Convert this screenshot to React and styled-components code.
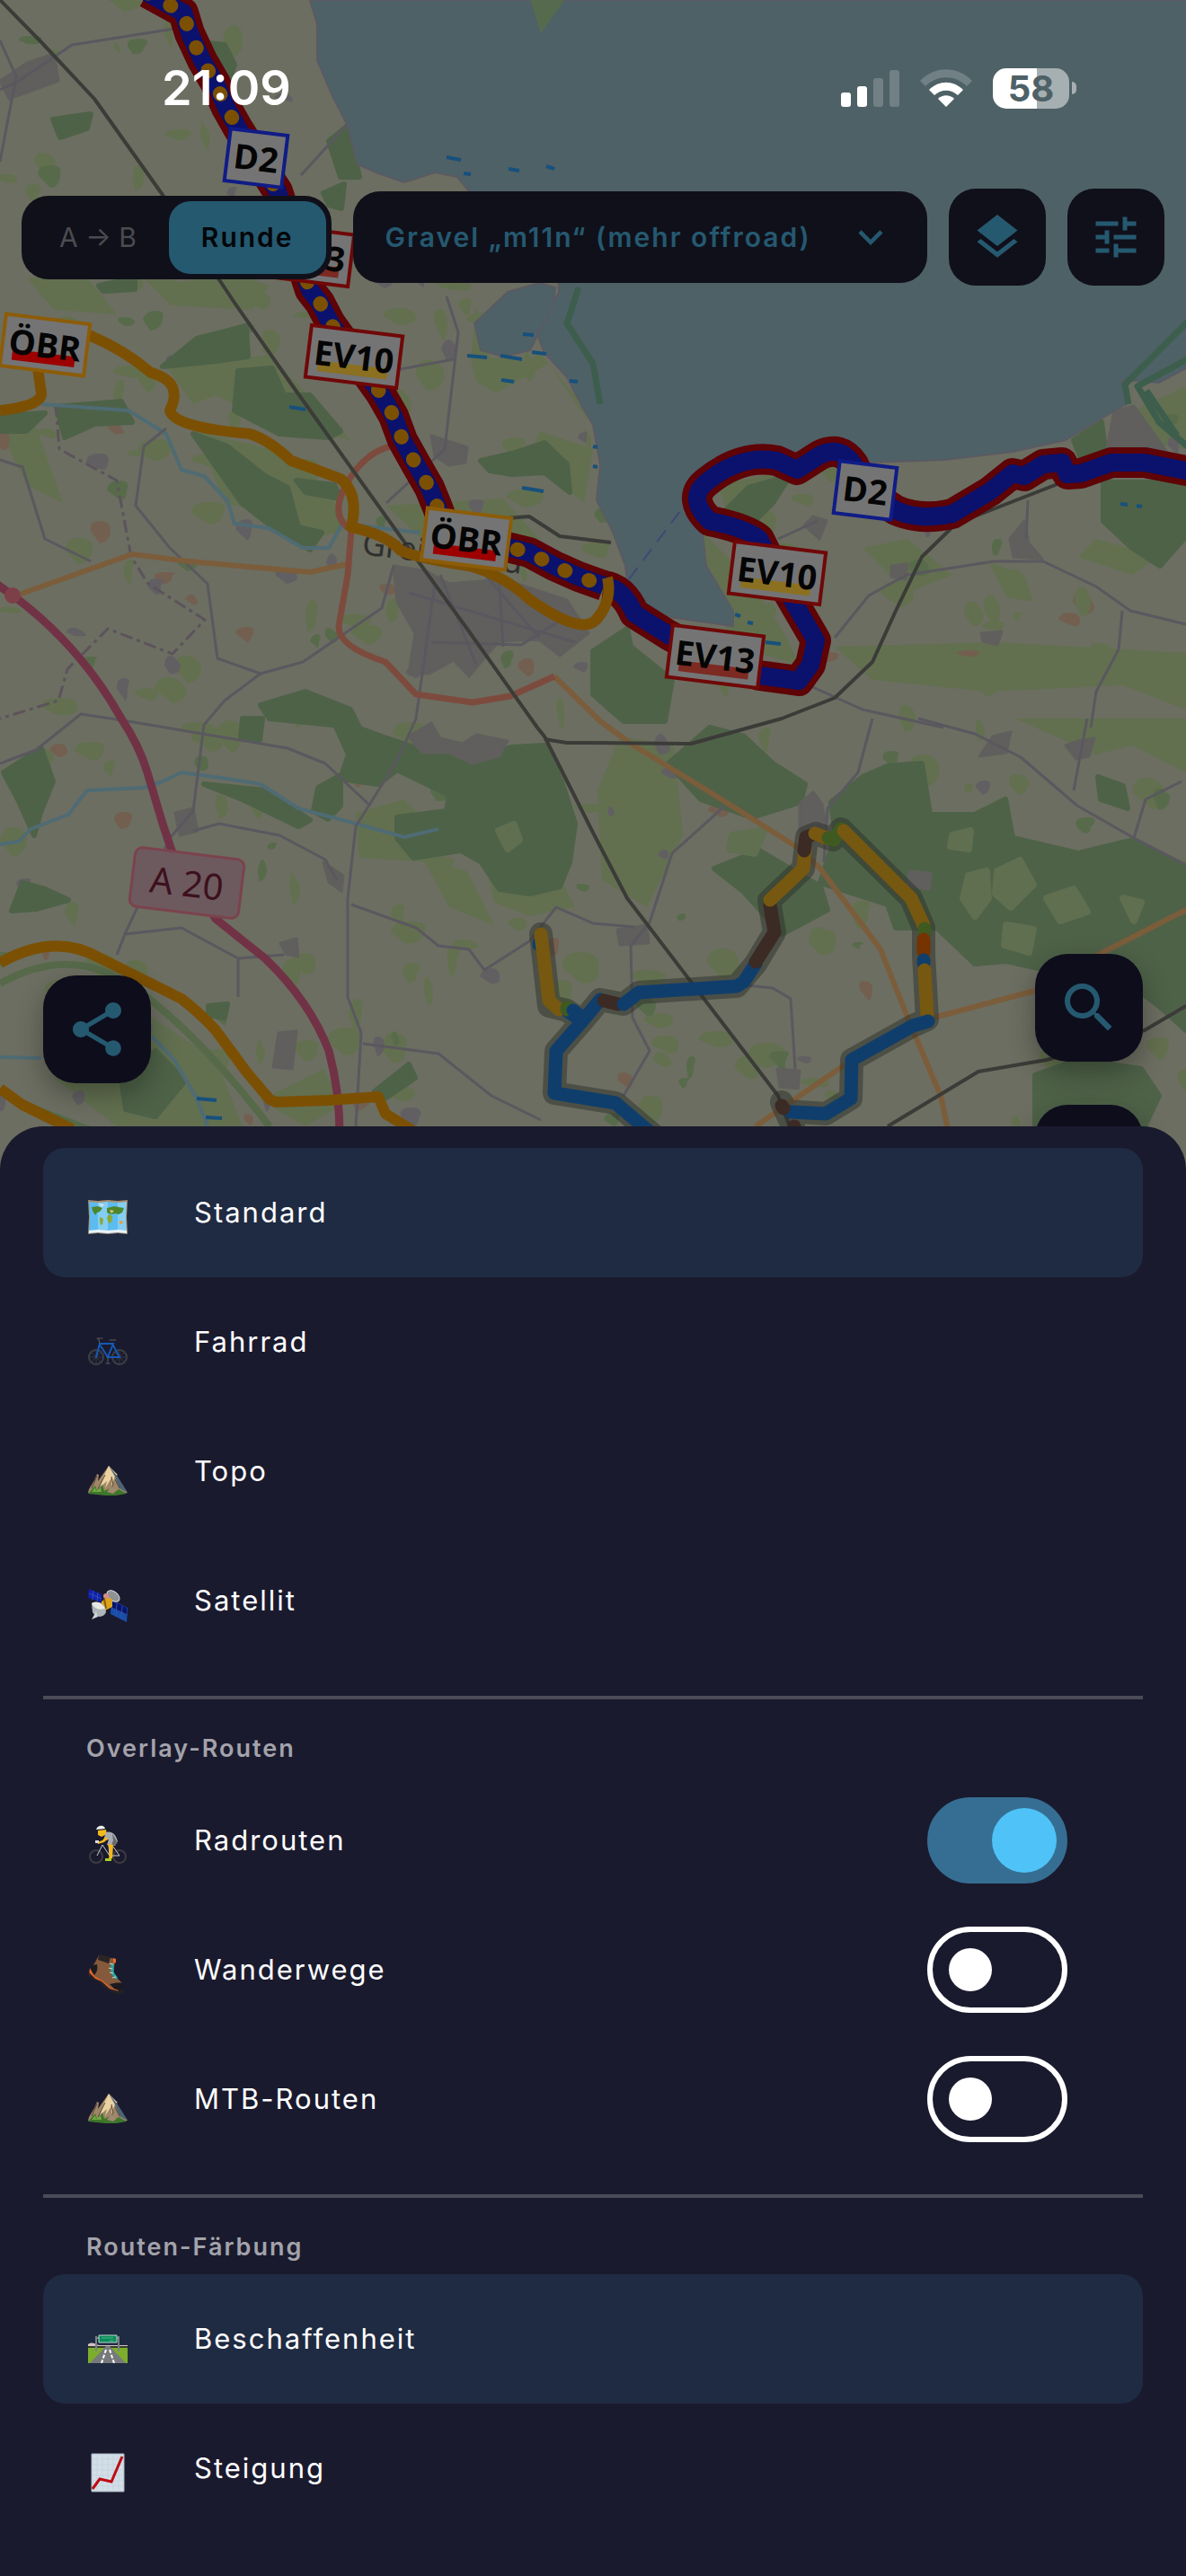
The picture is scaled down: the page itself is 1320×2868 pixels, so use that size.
import React, { useState } from 'react';
import styled, { createGlobalStyle } from 'styled-components';
import {
  MdKeyboardArrowDown,
  MdLayers,
  MdMyLocation,
  MdSearch,
  MdShare,
  MdTune,
} from 'react-icons/md';

const GlobalStyle = createGlobalStyle`
  * {
    box-sizing: border-box;
  }

  body {
    margin: 0;
    background: #1a1a2e;
    font-family: Inter, 'Liberation Sans', sans-serif;
  }

  button,
  select,
  input {
    margin: 0;
    font-family: inherit;
  }
`;

const Page = styled.div`
  display: flex;
  flex-direction: column;
  min-height: 100vh;
`;

const MapArea = styled.section`
  position: relative;
  display: flex;
  flex: 1;
  flex-direction: column;
  min-height: 640px;
`;

// runs on behind the rounded corners of the sheet
const MapCanvas = styled.svg`
  position: absolute;
  top: 0;
  left: 0;
  width: 100%;
  height: calc(100% + 48px);
  background: #6c6e61;
`;

const StatusBar = styled.header`
  position: relative;
  display: flex;
  align-items: center;
  justify-content: space-between;
  height: 130px;
  padding: 66px 122px 0 180px;
  color: #fff;
`;

const Clock = styled.time`
  font-size: 54px;
  font-weight: 600;
  line-height: 64px;
`;

const StatusIcons = styled.div`
  display: flex;
  align-items: center;
  gap: 23px;
`;

const Battery = styled.div`
  display: flex;
  align-items: center;
  gap: 3px;

  &::after {
    content: '';
    width: 5px;
    height: 14px;
    border-radius: 0 7px 7px 0;
    background: #a6afb2;
  }
`;

const BatteryLevel = styled.span`
  width: 85px;
  border-radius: 15px;
  background: linear-gradient(to right, #fff 58%, #a6afb2 58%);
  color: #4e6167;
  font-size: 40px;
  font-weight: 700;
  line-height: 45px;
  text-align: center;
`;

const Toolbar = styled.nav`
  position: relative;
  display: flex;
  align-items: center;
  gap: 24px;
  margin-top: 80px;
  padding: 0 24px;
`;

const Segmented = styled.div`
  display: flex;
  padding: 6px;
  border-radius: 30px;
  background: #10101a;
`;

const Segment = styled.button`
  padding: 0 36px;
  border: 0;
  border-radius: 24px;
  background: ${({ $active }) => ($active ? '#255970' : 'transparent')};
  color: ${({ $active }) => ($active ? '#030609' : '#4b4b50')};
  font-size: 30px;
  font-weight: ${({ $active }) => ($active ? 600 : 400)};
  letter-spacing: ${({ $active }) => ($active ? '2px' : 'normal')};
  line-height: 81px;
`;

const ProfilePicker = styled.label`
  display: flex;
  flex: 1;
  align-items: center;
  min-width: 0;
  padding: 0 36px;
  border-radius: 30px;
  background: #10101a;
  color: #255970;
  font-size: 54px;

  svg {
    flex: none;
  }
`;

const ProfileSelect = styled.select`
  flex: 1;
  min-width: 0;
  height: 102px;
  padding: 0;
  border: 0;
  appearance: none;
  background: transparent;
  color: inherit;
  font-size: 30px;
  font-weight: 600;
  letter-spacing: 2px;
`;

const ToolButton = styled.button`
  display: flex;
  flex: none;
  align-items: center;
  justify-content: center;
  width: 108px;
  height: 108px;
  padding: 0;
  border: 0;
  border-radius: 30px;
  background: #10101a;
  color: #255970;
  font-size: 60px;
`;

const FloatingBar = styled.div`
  position: relative;
  display: flex;
  align-items: flex-end;
  justify-content: space-between;
  margin-top: auto;
  padding: 0 48px 48px;
`;

// the lower button is tucked under the sheet
const FloatingStack = styled.div`
  display: flex;
  flex-direction: column;
  gap: 48px;
  margin-bottom: -144px;
`;

const FloatingButton = styled(ToolButton)`
  width: 120px;
  height: 120px;
  border-radius: 36px;
  background: #0e0d1c;
  box-shadow: 0 12px 30px rgba(0, 0, 0, 0.3);
  font-size: 72px;
`;

const Sheet = styled.main`
  position: relative;
  padding: 24px 48px 48px;
  border-radius: 48px 48px 0 0;
  background: #1a1a2e;
  color: #fff;
`;

const Group = styled.fieldset`
  min-width: 0;
  margin: 0;
  padding: 0;
  border: 0;

  & + & {
    margin-top: 34px;
    border-top: 4px solid #4b4a58;
    padding-top: 34px;
  }
`;

const GroupTitle = styled.h2`
  margin: 0;
  padding: 0 48px 9px;
  color: #a3a3ab;
  font-size: 27px;
  font-weight: 600;
  letter-spacing: 2px;
  line-height: 42px;
`;

const Row = styled.label`
  display: flex;
  align-items: center;
  gap: 72px;
  height: 144px;
  padding: 0 84px 0 48px;
  border-radius: 24px;
  background: ${({ $selected }) => ($selected ? '#1f2b42' : 'transparent')};
`;

const RowIcon = styled.svg`
  flex: none;
  width: 48px;
  height: 54px;
  padding: 10px 2px 0;
`;

const RowLabel = styled.span`
  flex: 1;
  font-size: 31px;
  letter-spacing: 2px;
  line-height: 48px;
`;

const HiddenRadio = styled.input`
  width: 0;
  height: 0;
  appearance: none;
`;

const Toggle = styled.input`
  display: flex;
  flex: none;
  align-items: center;
  width: 156px;
  height: 96px;
  padding: 0 18px;
  border: 6px solid #fff;
  border-radius: 48px;
  appearance: none;

  &::before {
    content: '';
    width: 48px;
    height: 48px;
    border-radius: 50%;
    background: #fff;
  }

  &:checked {
    justify-content: flex-end;
    padding: 0 6px;
    border-color: #366e93;
    background: #366e93;
  }

  &:checked::before {
    width: 72px;
    height: 72px;
    background: #4fc3f7;
  }
`;

const SignalIcon = () => (
  <svg width="65" height="42" viewBox="0 0 65 42" fill="#fff">
    <rect x="0" y="26" width="11" height="16" rx="3" />
    <rect x="18" y="19" width="11" height="23" rx="3" />
    <rect x="36" y="10" width="11" height="32" rx="3" opacity="0.2" />
    <rect x="54" y="1" width="11" height="41" rx="3" opacity="0.2" />
  </svg>
);

const WifiIcon = () => (
  <svg width="58" height="42" viewBox="0 0 58 42" fill="#fff">
    <path d="M0 13C16-4 42-4 58 13l-6 6C39 6 19 6 6 19z" opacity="0.2" />
    <path d="M10 23c11-11 27-11 38 0l-6 6c-8-7-18-7-26 0z" />
    <path d="M20 33c5-5 13-5 18 0l-9 9z" />
  </svg>
);

const WorldMapIcon = () => (
  <>
    <path d="M0 3l11 1 11-1 11 1 11-1-1 19 1 19-11-1-11 1-11-1-11 1 1-19z" fill="#a98d70" />
    <path d="M1 5l10 1v33L1 40l1-18zM22 5l11 1v33l-11 1z" fill="#5cbcf0" />
    <path d="M11 6l11-1v35l-11-1zM33 6l10-1-1 17 1 18-10-1z" fill="#84cdf3" />
    <path d="M1 37l10-1 11 1 11-1 10 1v3l-10-1-11 1-11-1-10 1z" fill="#e6f2f8" />
    <path d="M4 11l7-1 5 2-3 4-3 1-2 3-3-5zM21 12l8-2 11 2-2 5-4 2-4-1-4 1-5-2z" fill="#4d862d" />
    <path d="M13 22l4 2-1 6-2 1-1-5zM23 19l4 2-1 7-3 1-2-6z" fill="#8ca92f" />
    <path d="M12 7l6 1-3 3z" fill="#dbe6e8" />
    <path d="M35 26l4 1-1 3-3-1z" fill="#ef9b35" />
    <path d="M24 14l5 1-3 3z" fill="#e3c577" />
  </>
);

const BikeIcon = () => (
  <g fill="none" strokeLinecap="round">
    <g stroke="#3e4046" strokeWidth="2">
      <circle cx="9" cy="34" r="8" />
      <circle cx="35" cy="34" r="8" />
    </g>
    <path
      d="M9 26v16M1 34h16M3 28l12 12M15 28L3 40M35 26v16M27 34h16M29 28l12 12M41 28L29 40"
      stroke="#37393f"
      strokeWidth="1"
    />
    <path d="M9 34l4-15h15L22 34h13L27 19M13 20l9 14" stroke="#1459b5" strokeWidth="2" />
    <path d="M13 19l-1-5-1 0M10 13h6M24 15h7M22 34v6M20 41h4" stroke="#5b5d63" strokeWidth="1" />
  </g>
);

const MountainIcon = () => (
  <>
    <path d="M1 37l6-10 3-7 2 1-1 7 12-17 9 11 12 19-9 1H12L0 41z" fill="#9e8667" />
    <path d="M23 11l-5 10-5 14 8-7-2 8 8-13-1 12 4-13 3-1z" fill="#ead2a2" />
    <path d="M23 11l9 11 12 19-9-5-5-13z" fill="#4a6478" />
    <path d="M26 23l2 9-5 9M30 26l5 10M19 21l-8 16M10 22l-6 14" stroke="#584537" strokeWidth="1" fill="none" />
    <path d="M0 42l8-9 2 6 6-7 2 7 7-3 4 5 5-4 9 5-12 2H19z" fill="#3e762b" />
    <path d="M4 40l4-5 1 4 5-4 1 5z" fill="#70a941" />
    <path d="M21 40l5-6 5 4-3 4z" fill="#a18a70" />
  </>
);

const SatelliteIcon = () => (
  <>
    <path d="M1 4l14 6v9L0 14z" fill="#1020b0" />
    <path d="M26 16l18 9-1 16-18-9z" fill="#174eaa" />
    <path d="M26 17l17 8v8l-17-8z" fill="#08146e" />
    <path d="M1 9l14 6M6 6L5 16M11 8l-1 10M26 25l18 8M32 20l-1 15M38 23l-1 15" stroke="#3450a8" fill="none" />
    <ellipse cx="28" cy="12" rx="8" ry="5" transform="rotate(38 28 12)" fill="#8e9295" stroke="#d7d8d8" />
    <path d="M15 18l7-5 5 3v8l-8 4-5-4z" fill="#daa51d" />
    <path d="M18 15l2 11" stroke="#8d5a11" strokeWidth="2" />
    <circle cx="20" cy="12" r="3" fill="#d78e87" />
    <path d="M4 20c7-4 16 1 16 10-3 7-12 6-15 0z" fill="#aeb5b9" />
    <path d="M4 20c6-3 12 0 15 6-7 2-12 0-15-6z" fill="#e8e8e3" />
    <path d="M9 29l-5 9 7-3z" fill="#d0d3d5" />
  </>
);

const CyclistIcon = () => (
  <>
    <g fill="none" stroke="#3b3b42" strokeWidth="2">
      <circle cx="9" cy="35" r="7" />
      <circle cx="35" cy="35" r="7" />
    </g>
    <path d="M10 34l6-12 8 12M24 34l-1-12M28 24l7 10H24" fill="none" stroke="#c9ccd0" strokeWidth="1" />
    <path d="M11 6l9-1 1 5-6 3-4-2z" fill="#f4b91d" />
    <path d="M9 5c1-5 9-6 10-1z" fill="#eef0f0" />
    <path d="M20 8c6-2 11 2 13 10l-3 5-9-1 2-6-3 1-2-3z" fill="#a9abb0" />
    <path d="M27 10l5 8-1 4-5 1 2-6z" fill="#66676c" />
    <path d="M19 13l3 2-4 4-7 2-1-2 6-2zM22 21l6 1-1 15-4 1 1-10z" fill="#f5b818" />
    <path d="M8 17h4v3H8z" fill="#d8dde1" />
    <path d="M19 37h7v3h-7z" fill="#a8cf22" />
  </>
);

const BootIcon = () => (
  <>
    <path d="M12 1l18 4c0 7-2 13-1 18l10 10v8l-9 2-12-9-10-8-7-6 5-8z" fill="#855a3c" />
    <path d="M12 0l13 3-2 7-12-4z" fill="#2b2523" />
    <path d="M2 17c1-3 4-6 8-6 1 5 0 8-3 12z" fill="#1b1b20" />
    <path d="M28 4l3 1v4l-3 1z" fill="#ee672d" />
    <path d="M27 10v10l5 7" fill="none" stroke="#25a9a8" strokeWidth="3" />
    <path d="M24 10l4 1M23 15l4 1M24 20l4 1M27 26l4-1" stroke="#d1dad9" />
    <path d="M24 33c5-1 10-2 15-1l1 6-6 5z" fill="#1b1a20" />
    <path d="M2 15l5 9 10 6 8 7 9 3-2 3-10-4-10-9L1 23z" fill="#e36424" />
    <path d="M0 19l8 8 7 3 9 8 10 3 6-4-1 7H30l-9-5-9-8-9-4z" fill="#222126" />
  </>
);

const RoadIcon = () => (
  <>
    <path d="M0 23c6-4 9 1 13 1h31v3H0z" fill="#d8c0c5" />
    <path d="M0 25h44v19H0z" fill="#7dae2b" />
    <path d="M0 25h44v2H0z" fill="#34402c" />
    <path d="M20 25h4l18 19H2z" fill="#777a7c" />
    <path d="M20 29L15 44M24 29l5 15" stroke="#fff" strokeWidth="2" strokeDasharray="4 2" />
    <path d="M9 14v17M34 14v17M9 16h26" stroke="#7a8288" strokeWidth="2" />
    <path d="M12 13h20v8H12z" fill="#0b8c5b" stroke="#bbd9cd" />
    <path d="M15 16h13M24 19h4" stroke="#4fb083" />
  </>
);

const ChartIcon = () => (
  <>
    <path d="M4 1h36v42H4z" fill="#d3dfe8" stroke="#a9b5bf" />
    <path
      d="M4 7h36M4 13h36M4 19h36M4 25h36M4 31h36M4 37h36M10 1v42M16 1v42M22 1v42M28 1v42M34 1v42"
      stroke="#c7d3dd"
      strokeWidth="1"
    />
    <path d="M5 40l8-11 13 3L38 4" fill="none" stroke="#bd0b12" strokeWidth="3" />
  </>
);

const WATER = [
  '345,0 353,27 353,67 370,107 387,140 398,183 421,193 450,203 484,192 509,197 522,213 560,240 620,290 622,325 598,373 606,393 631,420 648,453 660,473 668,517 664,557 681,590 696,630 698,647 715,673 744,687 816,697 816,680 786,630 782,593 761,563 763,540 820,512 887,515 929,497 963,515 1051,512 1127,503 1186,490 1224,467 1253,450 1249,423 1290,426 1320,410 1320,0',
  '565,325 600,315 618,320 616,340 600,370 590,390 560,397 535,390 528,360',
];

const MEADOWS = [
  '929,720 1110,715 1320,727 1320,790 1249,763 1100,770 971,757',
  '782,593 830,640 870,700 890,740 816,720 786,640',
  '530,340 524,400 530,425 552,438 575,425 610,405 640,440 655,470 600,390 590,402 545,398',
  '219,480 300,500 370,560 385,590 350,600 290,570 250,560',
  '185,408 300,395 390,490 300,470 240,440 215,450',
  '150,300 200,314 260,305 300,318 280,345 190,340',
  '30,310 60,345 130,350 90,300',
  '60,1130 120,1100 240,1180 270,1254 130,1254 60,1200',
  '396,905 450,890 500,940 480,960 400,955',
  '540,960 620,970 640,1010 590,1020 550,1005',
  '470,955 520,970 550,1030 500,1010',
  '690,820 750,830 760,930 720,1010 670,980 665,880',
  '1130,800 1320,800 1320,860 1260,830 1220,840',
  '960,610 1010,600 1060,640 1010,660',
  '1100,625 1140,640 1150,670 1120,665',
  '1256,460 1320,430 1320,500 1290,495',
  '800,540 870,525 850,580 810,580',
  '1220,600 1290,620 1260,640 1200,620',
  '440,240 500,315 420,290',
  '589,0 602,37 631,0',
  '430,563 560,555 600,600 470,600',
  '600,480 660,500 650,560 590,510',
  '0,480 40,475 70,560 30,540',
  '290,1225 360,1190 380,1230 340,1254',
];

const FORESTS = [
  '219,377 274,363 276,397 240,402 181,408',
  '265,413 303,410 316,440 345,440 379,480 366,487 311,483 261,457',
  '215,483 253,497 295,530 320,543 332,587 358,593 345,612 311,593 269,560 248,530',
  '63,453 135,447 147,470 105,472 72,487',
  '0,463 50,460 29,480 0,480',
  '535,513 570,505 606,493 631,517 634,548 606,526 570,528 545,524',
  '330,535 372,540 379,555 340,548',
  '4,860 46,833 59,870 45,905 38,930 20,890',
  '13,1014 25,983 50,990 76,1002 40,1012',
  '370,800 425,820 470,835 539,840 570,832 606,830 625,870 640,917 634,960 623,987 590,995 556,990 536,960 513,947 460,955 442,933 442,910 497,903 500,885 442,857 421,873 379,867 388,840',
  '354,877 379,863 379,897 365,912 349,903',
  '227,873 295,880 345,913 332,920 270,890',
  '270,800 292,800 289,824 268,820',
  '135,1200 173,1170 206,1203 173,1243 140,1235',
  '232,1120 253,1118 250,1133 232,1130',
  '290,785 340,770 390,790 400,810 300,800',
  '660,725 698,700 702,720 748,757 740,803 694,803 660,773',
  '833,543 879,530 860,560 833,587 806,570',
  '1228,537 1320,537 1320,597 1291,630 1260,610 1228,580',
  '1195,490 1226,470 1230,500 1204,512',
  '744,850 790,810 828,820 860,850 896,873 891,893 837,910 780,890',
  '925,893 960,865 988,853 1026,850 1035,907 1085,907 1119,890 1127,933 1200,950 1262,935 1320,967 1320,1147 1290,1120 1250,1090 1200,1070 1165,1080 1120,1070 1085,1073 1043,1033 997,1033 988,1007 913,983 930,930',
  '795,967 845,947 913,987 921,1013 870,1040 828,993',
  '1152,1197 1200,1180 1270,1190 1290,1220 1274,1254 1152,1254',
  '1222,865 1250,875 1255,900 1225,890',
  '59,133 101,127 97,143 67,153',
  '231,48 250,50 261,72 250,100 240,72',
  '366,157 387,140 400,197 379,197',
  '360,215 383,205 380,232 366,228',
  '110,318 150,310 150,322 115,324',
  '417,1215 455,1185 462,1200 430,1222',
  '560,205 590,202 620,213 570,213',
];

// open ground inside the woods
const CLEARINGS = [
  '555,925 572,918 578,935 565,945',
  '1078,975 1098,970 1100,1000 1085,1020 1072,1000',
  '1110,970 1135,958 1150,985 1125,1010 1108,995',
  '1060,930 1080,925 1078,945 1058,942',
  '1165,1000 1195,990 1210,1015 1180,1025',
  '1250,1000 1270,1005 1262,1025',
  '1120,1030 1150,1035 1145,1060 1118,1052',
  '815,930 850,925 840,950 812,945',
];

const TOWNS = [
  '438,630 475,636 500,650 560,645 631,668 655,705 623,730 600,712 555,714 522,753 505,735 478,750 455,750 462,705 442,670',
  '30,70 60,60 65,90 10,110 0,90',
  '455,820 480,805 490,822 515,828 530,818 565,825 555,842 525,850 500,838 470,838',
  '195,905 215,900 220,925 200,930',
  '890,895 905,882 915,895 920,925 890,925',
  '1012,970 1036,972 1034,990 1010,986',
  '1124,600 1140,580 1145,605 1160,622 1128,620',
  '895,585 905,575 920,580 912,600',
  '1186,830 1200,825 1218,822 1212,842 1198,845',
  '1105,820 1125,815 1120,838 1090,842',
  '480,485 520,498 518,515 500,518 484,508',
  '310,1150 330,1148 325,1190 304,1188',
  '992,630 1010,628 1008,645 992,642',
  '1092,705 1115,703 1110,718 1094,714',
  '1240,458 1262,452 1300,505 1232,500',
  '687,1035 720,1030 722,1050 690,1052',
  '865,1190 890,1192 888,1212 868,1210',
  '360,960 382,975 380,992 366,982',
  '312,1050 330,1045 332,1065 318,1062',
];

const ROADS = [
  'M0 100L21 90 80 50 194 32',
  'M0 45L18 85 0 180',
  'M0 512L25 520 50 600 101 625',
  'M185 477L160 497 151 563 189 610 231 650 242 733 290 750 337 737 425 677 438 630',
  'M290 750L250 780 227 807 215 903 189 933 139 1040 130 1063',
  'M484 650L463 800 442 847 396 920 387 1000 387 1110 402 1150 396 1254',
  'M143 803L320 833 362 850 412 897',
  'M0 850L40 835 90 795 143 803',
  'M215 925L244 917 311 930 362 957 375 980',
  'M391 1007L463 1033 488 1053 522 1057 539 1080 589 1048 619 1010 660 1028 706 1032',
  'M139 1040L202 1033 265 1067 316 1063M265 1067L265 1110',
  'M404 1162L488 1173 547 1220 602 1247',
  'M929 710L967 663 1009 640 1106 625 1161 625 1220 653 1258 680 1320 695',
  'M1249 680L1245 723 1220 770 1214 810',
  'M1022 800L1085 817 1136 843 1199 897 1262 933 1320 963',
  'M971 800L955 860 921 900 917 960',
  'M807 897L748 950 723 1027 702 1053 704 1133 723 1170 694 1220',
  'M1144 557L1142 600M866 600L910 580',
  'M889 758L960 790 1050 810',
  'M497 330L510 370 495 500 430 560',
  'M440 412L505 400',
  'M335 195L385 140',
  'M1210 800L1195 880M1262 933L1275 890 1315 870',
  'M820 1096L860 1100 880 1112 885 1190',
  'M455 660L640 715M490 640L530 740M540 640L600 710M555 640L560 720',
  'M480 715L580 718 625 690',
];

const RAILWAYS = [
  'M0 0L46 47 105 110 181 217 261 337 328 433 421 563 467 627 522 703 598 810 606 820 660 927 698 1000 782 1110 866 1220 882 1262',
  'M606 823L631 827 660 827 769 828 870 800 929 777 971 737 997 680 1026 620 1064 583 1123 560 1182 537',
  'M564 577L589 575 623 597 680 604',
  'M988 1254L1089 1193 1165 1180 1274 1147 1320 1120',
];

const RIVERS = [
  'M46 450L143 457 185 483 202 523 227 530 253 557 261 583 299 588 337 610 366 610 381 583 467 593',
  'M0 940L21 937 34 923 76 907 97 880 160 877 181 870 202 860 253 867 290 873 332 900 396 917 450 932 488 923',
  'M0 1177L46 1178M168 1153L194 1180 219 1223 231 1254',
];

const TRUNKS = [
  'M21 662L147 617 210 625 345 637 391 627',
  'M617 753L668 803 702 828 803 890 887 943 913 967 980 1057 1013 1140 1047 1220 1056 1262',
  'M841 1254L938 1187 1039 1133 1152 1103 1228 1060 1320 1013',
];

const CYCLE_ROUTES = [
  'M0 457Q46 452 46 438L42 410',
  'M99 373Q139 390 168 415 205 425 189 457 194 476 278 483 300 490 324 513 350 522 379 533 400 550 391 587 430 595 446 613 467 622 522 630 560 640 589 667 650 710 665 688 682 668 673 645',
  'M0 1072Q60 1038 110 1066L202 1112Q225 1130 240 1147L274 1193 300 1224 307 1227 366 1225 421 1221 429 1240 465 1262',
  'M0 1212L25 1230 80 1257',
];

const COAST_ROUTE_WEST =
  'M164 -8L204 14 211 37 225 67 240 93 252 120 265 143 309 213 345 323 356 337 368 360 423 437 438 463 448 490 463 517 478 543 487 565 500 600 560 608 589 615 617 630 644 642 672 652';
const COAST_ROUTE_EAST =
  'M672 652Q694 655 706 683L744 707 796 735 845 752 889 758 902 740 908 713 883 670 860 630 845 600 Q830 588 790 580 764 555 786 537 825 505 865 513L887 523 912 507Q935 495 950 517L963 546 997 568Q1024 580 1060 572L1102 547 1127 527 1140 530 1161 517 1182 515 1188 528 1203 527 1237 515 1274 515 1330 526';

const TOUR_OUTLINE =
  'M602 1040L611 1120 631 1125 648 1137 619 1170 617 1217 685 1228 725 1262M648 1137L668 1113 694 1118 711 1105 820 1098 841 1073 862 1038 856 1003 894 967 898 932 908 928 927 935 936 923 1014 1000 1028 1033 1028 1063 1032 1135 1016 1142 948 1180 947 1223 919 1240 875 1237 870 1227 886 1262';

const TOUR_SURFACES = [
  { color: '#0f3e6c', d: 'M600 1050L600 1052M631 1125L648 1137 619 1170 617 1217 685 1228 725 1262M648 1137L668 1113' },
  { color: '#775810', d: 'M602 1040L611 1114 622 1124' },
  { color: '#3f5a20', d: 'M631 1122L631 1124' },
  { color: '#0f3e6c', d: 'M638 1125L648 1133' },
  { color: '#3c2a24', d: 'M672 1114L688 1118' },
  { color: '#0f3e6c', d: 'M694 1118L711 1105 820 1098 828 1093 841 1073' },
  { color: '#3c2a24', d: 'M841 1071L862 1038 857 1008' },
  { color: '#775810', d: 'M857 1002L894 967 896 945' },
  { color: '#3c2a24', d: 'M895 947L897 932 903 930' },
  { color: '#775810', d: 'M907 928L920 933' },
  { color: '#3f5a20', d: 'M922 933L928 935 936 923' },
  { color: '#775810', d: 'M939 925L1014 1000 1028 1030' },
  { color: '#3f5a20', d: 'M1029 1034L1029 1038' },
  { color: '#743300', d: 'M1028 1046L1028 1060' },
  { color: '#0f3e6c', d: 'M1028 1069L1028 1072' },
  { color: '#775810', d: 'M1029 1080L1032 1130' },
  { color: '#0f3e6c', d: 'M1033 1137L1016 1142 948 1180 947 1223 919 1240 880 1238' },
  { color: '#3c2a24', d: 'M870 1231L872 1234M884 1254L885 1262' },
];

const ROUTE_SIGNS = [
  { x: 285, y: 176, text: 'D2', frame: '#101c86' },
  { x: 340, y: 284, text: 'EV13', frame: '#700808', mark: '#7c2a22' },
  { x: 394, y: 397, text: 'EV10', frame: '#700808', mark: '#8a7020' },
  { x: 50, y: 384, text: 'ÖBR', frame: '#8c5c08', mark: '#9c0000' },
  { x: 519, y: 600, text: 'ÖBR', frame: '#8c5c08', mark: '#9c0000' },
  { x: 963, y: 546, text: 'D2', frame: '#101c86' },
  { x: 865, y: 638, text: 'EV10', frame: '#700808', mark: '#8a7020' },
  { x: 796, y: 731, text: 'EV13', frame: '#700808', mark: '#7c2a22' },
];

const SIGN_WIDTH = { D2: 64, 'ÖBR': 94, EV10: 102, EV13: 102 };

const HATCHES =
  'M497 175l16 3M516 193l8 1M566 188l12 2M608 185l9 3M520 396l22 2M557 396l24 4M582 372l12 1M592 392l16 2M558 423l14 2M322 453l18 3M581 543l24 4M852 715l17 2M1247 561l8 1M1265 563l6 1M634 424l9 1M219 1223l22 2M229 1244l18 1M660 497l5 1M660 519l5 1M813 572l8 2M818 684l6 2M832 693l6 1';

const SHORE_RESERVES =
  'M644 320L631 360 660 405 668 450M1325 355L1252 428 1256 450M1325 398L1266 430 1290 470 1325 500M1276 435L1310 485';

const PATCH_COLORS = ['#63704f', '#576b4b', '#625f63', '#735f50'];

// scattered fields and farmsteads, the same on every render
const makePatches = () => {
  const patches = [];
  let seed = 41;
  const next = () => {
    seed = (seed * 16807) % 2147483647;
    return seed / 2147483647;
  };
  const around = size => Math.round((next() - 0.5) * size);
  for (let i = 0; i < 380; i += 1) {
    const x = Math.round(next() * 1320);
    const y = Math.round(next() * 1250);
    const kind = next();
    const color = kind < 0.62 ? 0 : kind < 0.76 ? 1 : kind < 0.93 ? 2 : 3;
    const w = Math.round(4 + next() * (color === 0 ? 16 : 8));
    const h = Math.round(4 + next() * (color === 0 ? 14 : 8));
    patches.push({
      d: `M${x - w} ${y}Q${x - w + around(6)} ${y - h} ${x + around(8)} ${y - h}T${x + w} ${y + around(8)}Q${x + w} ${y + h} ${x + around(8)} ${y + h + around(6)}z`,
      color: PATCH_COLORS[color],
    });
  }
  return patches;
};

const PATCHES = makePatches();

const RouteMap = () => (
  <MapCanvas viewBox="0 0 1320 1302" preserveAspectRatio="xMidYMid slice" role="img" aria-label="Karte">
    <g fill="#627050">
      {MEADOWS.map(points => (
        <polygon key={points} points={points} />
      ))}
    </g>
    {PATCHES.map(({ d, color }) => (
      <path key={d} d={d} fill={color} />
    ))}
    <g fill="#4e6248" stroke="#4e6248" strokeWidth="6" strokeLinejoin="round">
      {FORESTS.map(points => (
        <polygon key={points} points={points} />
      ))}
    </g>
    <g fill="#5f6f50" stroke="#5f6f50" strokeWidth="8" strokeLinejoin="round">
      {CLEARINGS.map(points => (
        <polygon key={points} points={points} />
      ))}
    </g>
    <g fill="#605f5d" stroke="#605f5d" strokeWidth="3" strokeLinejoin="round">
      {TOWNS.map(points => (
        <polygon key={points} points={points} />
      ))}
    </g>
    <g fill="#4e6167" stroke="#5b5a63" strokeWidth="2">
      {WATER.map(points => (
        <polygon key={points} points={points} />
      ))}
    </g>
    <path d="M589 -4L602 37 631 -4z" fill="#566b4d" />
    <path d="M700 645L760 565" stroke="#3d4a75" strokeWidth="2" strokeDasharray="16 10" />

    <g fill="none" strokeLinejoin="round">
      <path d={SHORE_RESERVES} stroke="#3d5e4c" strokeWidth="7" />
      <path d="M0 1095Q80 1050 150 1100T300 1254M40 1235L100 1258" stroke="#566a4a" strokeWidth="8" />
      <path
        d="M62 450L66 500 130 535 146 620 165 650 228 690 192 728 120 700 75 745 65 780 0 800"
        stroke="#5c535c"
        strokeWidth="3"
        strokeDasharray="14 5 4 5"
      />
      {RIVERS.map(d => (
        <path key={d} d={d} stroke="#4f6b74" strokeWidth="4" />
      ))}
      {ROADS.map(d => (
        <path key={d} d={d} stroke="#5a585f" strokeWidth="3" />
      ))}
      {TRUNKS.map(d => (
        <path key={d} d={d} stroke="#7b5d3b" strokeWidth="6" />
      ))}
      <path
        d="M434 497Q404 505 385 540T391 590L387 640 377 697Q376 720 429 737L463 773 526 782 568 775 617 753"
        stroke="#7d4b3e"
        strokeWidth="7"
      />
      {RAILWAYS.map(d => (
        <path key={d} d={d} stroke="#3b3b38" strokeWidth="4" />
      ))}
      <path
        d="M-4 650L17 665Q90 720 135 800 155 830 164 860L181 917 191 947 240 1023 295 1067Q345 1115 366 1170 378 1215 378 1262"
        stroke="#713246"
        strokeWidth="9"
      />
      <path d={HATCHES} stroke="#17507c" strokeWidth="4" />
    </g>
    <circle cx="14" cy="663" r="9" fill="#7d4048" />

    <text
      transform="rotate(7 402 617)"
      x="402"
      y="617"
      fill="#30302e"
      fontFamily="'Noto Sans', sans-serif"
      fontSize="36"
    >
      Greifswald
    </text>

    <g fill="none" strokeLinejoin="round">
      {CYCLE_ROUTES.map(d => (
        <path key={d} d={d} stroke="#7c5003" strokeWidth="12" />
      ))}
      <path d={COAST_ROUTE_WEST} stroke="#5e0306" strokeWidth="34" />
      <path d={COAST_ROUTE_EAST} stroke="#5e0306" strokeWidth="34" />
      <path d={COAST_ROUTE_WEST} stroke="#0a126e" strokeWidth="20" />
      <path d={COAST_ROUTE_EAST} stroke="#0a126e" strokeWidth="20" />
      <path
        d={COAST_ROUTE_WEST}
        stroke="#7c5003"
        strokeWidth="16"
        strokeDasharray="1 28"
        strokeLinecap="round"
      />
      <path d="M676 643Q682 668 664 690" stroke="#7c5003" strokeWidth="12" />
    </g>

    <g fill="none" strokeLinecap="round" strokeLinejoin="round">
      <path d={TOUR_OUTLINE} stroke="#2c2f2a" strokeOpacity="0.5" strokeWidth="26" />
      {TOUR_SURFACES.map(({ d, color }) => (
        <path key={d} d={d} stroke={color} strokeWidth="15" />
      ))}
    </g>

    {ROUTE_SIGNS.map(({ x, y, text, frame, mark }) => (
      <g key={`${x}-${y}`} transform={`translate(${x} ${y}) rotate(7)`}>
        <rect
          x={-SIGN_WIDTH[text] / 2}
          y="-29"
          width={SIGN_WIDTH[text]}
          height="58"
          fill="#747475"
          stroke={frame}
          strokeWidth="4"
        />
        {mark && <rect x={12 - SIGN_WIDTH[text] / 2} y="9" width={SIGN_WIDTH[text] - 24} height="12" fill={mark} />}
        <text
          y="14"
          fill="#050505"
          fontFamily="'Liberation Sans Narrow', 'Open Sans', sans-serif"
          fontSize="38"
          fontWeight="700"
          textAnchor="middle"
        >
          {text}
        </text>
      </g>
    ))}
    <g transform="translate(208 983) rotate(7)">
      <rect x="-61" y="-33" width="122" height="66" rx="8" fill="#6d5a5f" stroke="#7b434d" strokeWidth="3" />
      <text
        y="15"
        fill="#3d101d"
        fontFamily="'Noto Sans', sans-serif"
        fontSize="40"
        textAnchor="middle"
      >
        A 20
      </text>
    </g>
  </MapCanvas>
);

const MAP_STYLES = [
  { id: 'standard', label: 'Standard', Icon: WorldMapIcon },
  { id: 'fahrrad', label: 'Fahrrad', Icon: BikeIcon },
  { id: 'topo', label: 'Topo', Icon: MountainIcon },
  { id: 'satellit', label: 'Satellit', Icon: SatelliteIcon },
];

const OVERLAYS = [
  { id: 'radrouten', label: 'Radrouten', Icon: CyclistIcon },
  { id: 'wanderwege', label: 'Wanderwege', Icon: BootIcon },
  { id: 'mtb', label: 'MTB-Routen', Icon: MountainIcon },
];

const COLORINGS = [
  { id: 'beschaffenheit', label: 'Beschaffenheit', Icon: RoadIcon },
  { id: 'steigung', label: 'Steigung', Icon: ChartIcon },
];

const RadioRows = ({ name, options, value, onChange }) =>
  options.map(({ id, label, Icon }) => (
    <Row key={id} $selected={value === id}>
      <RowIcon viewBox="0 0 44 44" aria-hidden="true">
        <Icon />
      </RowIcon>
      <RowLabel>{label}</RowLabel>
      <HiddenRadio type="radio" name={name} checked={value === id} onChange={() => onChange(id)} />
    </Row>
  ));

const App = () => {
  const [mode, setMode] = useState('runde');
  const [mapStyle, setMapStyle] = useState('standard');
  const [coloring, setColoring] = useState('beschaffenheit');
  const [overlays, setOverlays] = useState({ radrouten: true });

  const toggleOverlay = id => {
    setOverlays(current => ({ ...current, [id]: !current[id] }));
  };

  return (
    <Page>
      <GlobalStyle />
      <MapArea>
        <RouteMap />
        <StatusBar>
          <Clock>21:09</Clock>
          <StatusIcons>
            <SignalIcon />
            <WifiIcon />
            <Battery>
              <BatteryLevel>58</BatteryLevel>
            </Battery>
          </StatusIcons>
        </StatusBar>
        <Toolbar>
          <Segmented>
            <Segment $active={mode === 'ab'} onClick={() => setMode('ab')}>
              A → B
            </Segment>
            <Segment $active={mode === 'runde'} onClick={() => setMode('runde')}>
              Runde
            </Segment>
          </Segmented>
          <ProfilePicker>
            <ProfileSelect aria-label="Profil" defaultValue="m11n">
              <option value="m11n">Gravel „m11n“ (mehr offroad)</option>
            </ProfileSelect>
            <MdKeyboardArrowDown />
          </ProfilePicker>
          <ToolButton aria-label="Ebenen">
            <MdLayers />
          </ToolButton>
          <ToolButton aria-label="Einstellungen">
            <MdTune />
          </ToolButton>
        </Toolbar>
        <FloatingBar>
          <FloatingButton aria-label="Teilen">
            <MdShare />
          </FloatingButton>
          <FloatingStack>
            <FloatingButton aria-label="Suchen">
              <MdSearch />
            </FloatingButton>
            <FloatingButton aria-label="Standort">
              <MdMyLocation />
            </FloatingButton>
          </FloatingStack>
        </FloatingBar>
      </MapArea>

      <Sheet>
        <Group aria-label="Kartenstil">
          <RadioRows name="style" options={MAP_STYLES} value={mapStyle} onChange={setMapStyle} />
        </Group>
        <Group aria-labelledby="overlay-title">
          <GroupTitle id="overlay-title">Overlay-Routen</GroupTitle>
          {OVERLAYS.map(({ id, label, Icon }) => (
            <Row key={id}>
              <RowIcon viewBox="0 0 44 44" aria-hidden="true">
                <Icon />
              </RowIcon>
              <RowLabel>{label}</RowLabel>
              <Toggle
                type="checkbox"
                role="switch"
                checked={Boolean(overlays[id])}
                onChange={() => toggleOverlay(id)}
              />
            </Row>
          ))}
        </Group>
        <Group aria-labelledby="coloring-title">
          <GroupTitle id="coloring-title">Routen-Färbung</GroupTitle>
          <RadioRows name="coloring" options={COLORINGS} value={coloring} onChange={setColoring} />
        </Group>
      </Sheet>
    </Page>
  );
};

export default App;
